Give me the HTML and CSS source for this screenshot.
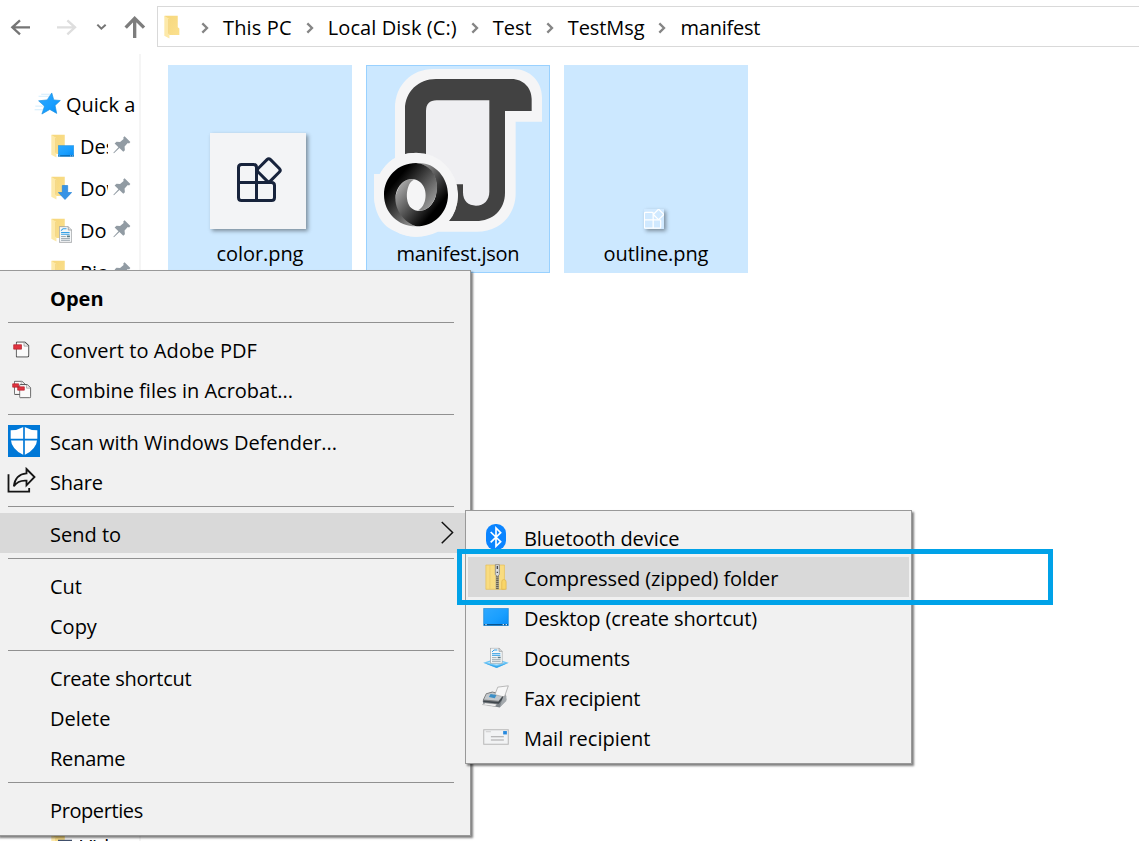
FILE: index.html
```html
<!DOCTYPE html>
<html lang="en">
<head>
<meta charset="utf-8">
<title>manifest</title>
<link rel="stylesheet" href="styles.css">
</head>
<body>
<svg class="defs" width="0" height="0">
  <defs>
    <linearGradient id="gold" x1="0" y1="0" x2="1" y2="1"><stop offset="0" stop-color="#f6d77c"/><stop offset="1" stop-color="#fbe08e"/></linearGradient>
    <linearGradient id="sky" x1="0" y1="0" x2="1" y2="1"><stop offset="0" stop-color="#2ea8ff"/><stop offset=".55" stop-color="#1a9fff"/><stop offset="1" stop-color="#078cf5"/></linearGradient>
    <linearGradient id="ringA" x1="0" y1="0" x2="1" y2="1"><stop offset=".25" stop-color="#000"/><stop offset=".9" stop-color="#bbb"/></linearGradient>
    <linearGradient id="ringB" x1="1" y1="1" x2="0" y2="0"><stop offset=".25" stop-color="#000"/><stop offset=".9" stop-color="#ccc"/></linearGradient>
    <symbol id="folder" viewBox="0 0 50 74">
      <path d="M2 2H43V38L48 42V62H10z" fill="url(#gold)"/>
      <path d="M1 2L17 12V73L1 64z" fill="#fde9a9"/>
      <path d="M15 12V58" stroke="#e9c362" stroke-width="2"/>
    </symbol>
    <symbol id="pin" viewBox="0 0 56 56">
      <path d="M36 1L54 19L50 23L46 22L36 33L37 44L32 49L20 37L3 54L1 52L17 35L5 23L11 18L22 19L33 9L32 5z" fill="#919ba3"/>
    </symbol>
    <symbol id="crumb" viewBox="0 0 24 36"><path d="M4 4L18 18L4 32" fill="none" stroke="#858585" stroke-width="7"/></symbol>
    <symbol id="doc" viewBox="0 0 38 48">
      <path d="M1 1H27L37 11V47H1z" fill="#f5f7f8" stroke="#8b9093" stroke-width="2"/>
      <path d="M27 1V11H37" fill="#ddd" stroke="#8b9093" stroke-width="2"/>
      <path d="M6 13L12 7H22M6 18H31M6 23H31" stroke="#36a0e5" stroke-width="3" fill="none"/>
      <path d="M6 30H20M6 36H32M6 41H32" stroke="#8c9aa3" stroke-width="2.5"/>
      <path d="M23 27H32V32H23z" fill="#5a7a86"/>
    </symbol>
    <symbol id="screen" viewBox="0 0 76 54">
      <path d="M1 1H75V53H1z" fill="url(#sky)" stroke="#1686d6" stroke-width="2"/>
      <path d="M2 50H74" stroke="#08548f" stroke-width="4"/><path d="M6 50H10M58 50H62M67 50H71" stroke="#fff" stroke-width="3"/>
    </symbol>
    <symbol id="page" viewBox="0 0 40 48">
      <path d="M3 2H26L38 13V42Q38 46 34 46H3Q1 46 1 43V5Q1 2 3 2z" fill="#fafafa" stroke="#444" stroke-width="3"/>
      <path d="M24 3V14H37" fill="#eee" stroke="#888" stroke-width="2"/>
    </symbol>
  </defs>
</svg>
<div class="window">
  <header class="toolbar">
    <svg class="nav" viewBox="0 0 471 141">
      <g fill="none" stroke-width="7">
        <path d="M90 82H37M60 61L37 82L60 103" stroke="#757575"/>
        <path d="M171 82H224M202 61L225 82L202 103" stroke="#dedede"/>
        <path d="M292 74L304 86L317 74" stroke="#757575" stroke-width="6"/>
        <path d="M404 114V58M377 83L404 55L432 83" stroke="#7d7d7d" stroke-width="10"/>
      </g>
    </svg>
    <nav class="address">
      <svg class="folder"><use href="#folder"/></svg>
      <svg class="crumb"><use href="#crumb"/></svg><span class="loose">This PC</span>
      <svg class="crumb"><use href="#crumb"/></svg><span class="loose-s">Local Disk (C:)</span>
      <svg class="crumb"><use href="#crumb"/></svg><span>Test</span>
      <svg class="crumb"><use href="#crumb"/></svg><span class="tight-s">TestMsg</span>
      <svg class="crumb"><use href="#crumb"/></svg><span class="tight">manifest</span>
    </nav>
  </header>
  <div class="body">
    <aside class="sidebar">
      <div class="quick">
        <svg class="star" viewBox="102 96 82 68"><path d="M124 102H152M116 108H150M106 138H136M104 149H130" stroke="#b9e2fa" stroke-width="2"/><path d="M156 98L162 119L182 121L166 136L171 160L150 148L126 162L134 138L116 122L142 119z" fill="url(#sky)" stroke="#198fe0" stroke-width="2"/></svg>
        <span>Quick a</span>
      </div>
      <div class="place"><svg class="folder"><use href="#folder"/></svg><svg class="badge screen"><use href="#screen"/></svg><span>Des</span><svg class="pin"><use href="#pin"/></svg></div>
      <div class="place"><svg class="folder"><use href="#folder"/></svg><svg class="badge arrow" viewBox="0 0 42 44"><path d="M13 1H29V22H41L21 43L1 22H13z" fill="#3793e6" stroke="#2382d8" stroke-width="2"/></svg><span>Dow</span><svg class="pin"><use href="#pin"/></svg></div>
      <div class="place"><svg class="folder"><use href="#folder"/></svg><svg class="badge doc"><use href="#doc"/></svg><span>Do</span><svg class="pin"><use href="#pin"/></svg></div>
      <div class="place"><svg class="folder"><use href="#folder"/></svg><span>Pic</span><svg class="pin"><use href="#pin"/></svg></div>
      <div class="place last"><svg class="folder"><use href="#folder"/></svg><svg class="badge film" viewBox="0 0 16 12"><path d="M0 0H16V12H0z" fill="#41506c"/></svg><span>Vid</span></div>
    </aside>
    <main class="files">
      <figure class="file">
        <div class="preview">
          <svg class="thumb color" viewBox="0 0 96 96"><g fill="none" stroke="#17233c" stroke-width="3"><path d="M46.5 34.5Q46.5 31.5 43.5 31.5H31.5Q28.500 31.5 28.500 34.500V64.500Q28.500 67.500 31.500 67.500H61.500Q64.500 67.500 64.500 64.500V52.500Q64.500 49.500 61.500 49.500H28.500M46.500 34.500V67.500"/><rect x="50" y="28.500" width="17.500" height="17.500" rx="2.500" transform="rotate(45 58.750 37.250)"/></g></svg>
        </div>
        <figcaption class="tight-s">color.png</figcaption>
      </figure>
      <figure class="file focused">
        <div class="preview">
          <svg class="json" viewBox="18 15 552 522">
            <path d="M105 290V145C105 75 155 27 220 27H460C510 27 546 65 546 112V185H467V400C467 465 420 515 350 515H234C190 535 145 535 108 515C65 500 42 455 42 405V342H62C72 318 90 302 105 294z" fill="#f5f5f6"/>
            <path d="M198 290V152Q198 121 230 121H390V395Q385 437 348 437Q312 437 309 395V373H280z" fill="#efeff2"/>
            <path d="M135 282V148C135 95 175 57 228 57H455C490 57 515 84 515 117V153H435V398C435 450 397 483 348 483H267Q292 455 294 405L288 373H309V397C309 423 325 437 348 437C372 437 388 420 388 395V121H230Q198 121 198 153V286Q165 274 135 282z" fill="#424242"/>
            <circle cx="168" cy="404" r="126" fill="#f5f5f6"/>
            <path d="M170 499C105 485 94 435 112 392C124 363 145 355 162 359C139 367 132 424 154 444C175 463 216 451 227 409C238 365 222 318 170 309C223 304 264 351 264 404C264 457 223 499 170 499z" fill="url(#ringB)"/>
            <path d="M168 309C114 309 72 351 72 404C72 457 114 499 168 499C124 484 94 433 111 391C123 361 156 346 180 366C207 388 199 440 174 451C201 458 227 428 231 391C235 352 215 314 168 309z" fill="url(#ringA)"/>
          </svg>
        </div>
        <figcaption class="tight">manifest.json</figcaption>
      </figure>
      <figure class="file">
        <div class="preview">
          <svg class="thumb outline" viewBox="24 24 48 48"><g fill="none" stroke="#fff" stroke-width="3"><path d="M46 34Q46 32 43 32H28Q25 32 25 35V67Q25 70 28 70H61Q64 70 64 67V52Q64 50 61 50H25M46 34V70"/><rect x="50" y="28" width="18" height="18" rx="2" transform="rotate(45 59 37)"/></g></svg>
        </div>
        <figcaption class="tight-s">outline.png</figcaption>
      </figure>
    </main>
  </div>

  <div class="menu context">
    <div class="item strong"><span class="label">Open</span></div>
    <hr>
    <div class="item"><svg class="ic pdf" viewBox="40 62 50 50"><use href="#page" x="48" y="63" width="41" height="48"/><path d="M42 73H65V86H42z" fill="#e0323e" stroke="#b3202b" stroke-width="2"/></svg><span class="label loose-s">Convert to Adobe PDF</span></div>
    <div class="item"><svg class="ic pdfs" viewBox="35 179 60 56"><use href="#page" x="41" y="180" width="36" height="44"/><use href="#page" x="57" y="190" width="36" height="44"/><path d="M37 190H55V200H37zM52 199H72V209H52z" fill="#e0323e" stroke="#b3202b" stroke-width="2"/></svg><span class="label">Combine files in Acrobat...</span></div>
    <hr>
    <div class="item"><svg class="ic shield" viewBox="24 315 96 96"><path d="M24 315H120V411H24z" fill="#0078d7"/><path d="M72 320Q92 331 112 331V356Q110 388 72 406Q34 388 32 356V331Q52 331 72 320z" fill="#fff"/><path d="M72 318V408M30 359H114" stroke="#0078d7" stroke-width="5"/></svg><span class="label scan">Scan with Windows Defender...</span></div>
    <div class="item"><svg class="ic share" viewBox="22 441 86 78"><path d="M26 463V515H88V504M80 447L104 471L80 496V482Q55 480 42 499Q46 463 80 460z" fill="none" stroke="#151515" stroke-width="5.500"/></svg><span class="label tight">Share</span></div>
    <hr>
    <div class="item active"><span class="label">Send to</span><svg class="more" viewBox="122 63 39 70"><path d="M124 66L157 98L124 131" fill="none" stroke="#111" stroke-width="4.500"/></svg></div>
    <hr>
    <div class="item"><span class="label">Cut</span></div>
    <div class="item"><span class="label">Copy</span></div>
    <hr>
    <div class="item"><span class="label tight">Create shortcut</span></div>
    <div class="item"><span class="label">Delete</span></div>
    <div class="item"><span class="label tight">Rename</span></div>
    <hr>
    <div class="item"><span class="label tighter">Properties</span></div>
  </div>

  <div class="menu submenu">
    <div class="item"><svg class="ic bt" viewBox="258 71 60 78"><rect x="258" y="71" width="60" height="78" rx="28" fill="#0a84ff"/><path d="M272 95L302 124L288 138V83L302 97L272 126" fill="none" stroke="#fff" stroke-width="5"/></svg><span class="label tight-s">Bluetooth device</span></div>
    <div class="item active"><svg class="ic zip" viewBox="257 191 64 77"><path d="M259 194H314V266H259z" fill="#f9dc80" stroke="#e5be55" stroke-width="2"/><path d="M271 195V265" stroke="#ebc866" stroke-width="2"/><path d="M306 266V244Q306 237 312 237Q319 237 319 244V266z" fill="#f9d568" stroke="#dfb34a" stroke-width="2"/><path d="M293 194V266" stroke="#a8a28e" stroke-width="10"/><path d="M293 226V266" stroke="#66604d" stroke-width="7" stroke-dasharray="3 3"/><path d="M287 193H299V222L293 228L287 222z" fill="#d8dadd" stroke="#777" stroke-width="2"/><path d="M293 197V206M291 216H295" stroke="#444" stroke-width="4"/></svg><span class="label tight-m">Compressed (zipped) folder</span></div>
    <div class="item"><svg class="ic desk"><use href="#screen"/></svg><span class="label tight-m">Desktop (create shortcut)</span></div>
    <div class="item"><svg class="ic docs" viewBox="68 142 78 64"><path d="M69 188L105 176L145 188L109 204z" fill="#6ec5f5"/><path d="M69 188L109 199L145 188L109 204z" fill="#38a8ec"/><path d="M80 188L107 180L133 188L109 195z" fill="#b6e4fb"/><use href="#doc" x="89" y="143" width="38" height="48"/></svg><span class="label tight-m">Documents</span></div>
    <div class="item"><svg class="ic fax" viewBox="66 254 82 72"><path d="M79 280L96 274L137 282L140 298L120 322L71 313L68 302z" fill="#7f858a"/><path d="M79 280L98 275L132 284L117 303L70 299z" fill="#c3c8cc" stroke="#666" stroke-width="2"/><path d="M105 283L114 260L146 256L134 290z" fill="#f7f7f7" stroke="#999" stroke-width="2"/><path d="M92 281L110 284L105 294L87 290z" fill="#3c8fc6"/><path d="M70 303L116 308L131 289" fill="none" stroke="#40474d" stroke-width="5"/><path d="M76 308L111 312L106 319L67 313z" fill="#f3f3f3" stroke="#888"/><path d="M120 321L140 302V286L130 290z" fill="#a4a9ad"/></svg><span class="label tight">Fax recipient</span></div>
    <div class="item"><svg class="ic mail" viewBox="69 386 76 47"><path d="M71 388H143V431H71z" fill="#f2f3f4" stroke="#b8b8b8" stroke-width="3"/><path d="M128 392H139V402H128z" fill="#2789de"/><path d="M92 409H130M92 418H130" stroke="#a5a5a5" stroke-width="3"/><path d="M77 394H92" stroke="#bbb" stroke-width="2"/></svg><span class="label">Mail recipient</span></div>
  </div>
  <div class="callout"></div>
</div>
</body>
</html>
```
FILE: styles.css
```css
* { box-sizing: border-box; }
body {
  margin: 0;
  background: #fff;
  color: #000;
  font-family: "Open Sans", "Noto Sans", sans-serif;
  font-size: 20px;
  line-height: 30px;
}
svg { display: block; flex: none; }
.defs { position: absolute; }
.window { position: relative; width: 1139px; height: 841px; overflow: hidden; }

.loose { letter-spacing: .15px; }
.loose-s { letter-spacing: .08px; }
.scan { letter-spacing: -.03px; }
.tight-s { letter-spacing: -.08px; }
.tight-m { letter-spacing: -.12px; }
.tight { letter-spacing: -.22px; }
.tighter { letter-spacing: -.4px; }

.toolbar { display: flex; height: 54px; }
.nav { width: 157px; height: 47px; }
.address {
  display: flex;
  align-items: center;
  flex: 1;
  height: 41px;
  margin-top: 6px;
  border: 1px solid #d9d9d9;
  border-right: 0;
  white-space: nowrap;
}
.address span { padding-top: 2px; }
.folder { width: 16px; height: 24px; }
.address .folder { margin: 0 21px 0 6px; }
.crumb { width: 8px; height: 12px; margin-top: 2px; }
.address span { margin: 0 14px; }

.body { display: flex; height: 787px; }
.sidebar {
  display: flex;
  flex-direction: column;
  width: 141px;
  padding-top: 29px;
  border-right: 2px solid #f5f5f5;
}
.quick { display: flex; flex: none; align-items: center; height: 42px; padding-left: 34px; white-space: nowrap; }
.quick span { padding-top: 1px; }
.star { width: 27px; height: 23px; margin: -2px 5px 0 0; }
.place { position: relative; display: flex; align-items: center; height: 42px; padding-left: 51px; flex: none; }
.place span { width: 28px; margin: 2px 5px 0 13px; overflow: hidden; }
.pin { width: 18px; height: 18px; margin-top: -3px; }
.badge { position: absolute; }
.badge.screen { left: 58px; top: 20px; width: 16px; height: 12px; }
.badge.arrow { left: 58px; top: 18px; width: 14px; height: 15px; }
.badge.doc { left: 59px; top: 17px; width: 13px; height: 17px; }
.badge.film { left: 58px; top: 14px; width: 14px; height: 12px; }
.place.last { margin-top: 532px; }
.place.last span { width: 32px; }

.files { display: flex; gap: 14px; padding: 11px 0 0 27px; }
.file { width: 184px; height: 208px; margin: 0; background: #cce8ff; }
.focused { box-shadow: inset 0 0 0 1px #99d1ff; }
.preview { display: flex; align-items: flex-end; justify-content: center; height: 174px; }
.json { width: 184px; height: 174px; }
.thumb { box-shadow: 2px 2px 4px rgba(0, 0, 0, .4); }
.color { width: 96px; height: 96px; margin: 0 4px 10px 0; background: #f3f4f6; }
.outline { width: 20px; height: 20px; margin: 0 4px 10px 0; background: #d0e9ff; }
.file figcaption { text-align: center; }

.menu {
  position: absolute;
  padding: 6px 2px;
  background: #f1f1f1;
  border: 1px solid #999;
  box-shadow: 2px 2px 2px rgba(0, 0, 0, .5);
}
.context { left: -3px; top: 270px; width: 474px; height: 566px; }
.submenu { left: 465px; top: 510px; width: 447px; height: 254px; }
.item { position: relative; display: flex; align-items: center; height: 40px; }
.label { padding-top: 3px; margin-left: 50px; white-space: nowrap; }
.submenu .label { margin-left: 56px; }
.active { background: #d9d9d9; }
.strong { font-weight: 700; }
.menu hr { height: 1px; margin: 5px 14px 6px 8px; border: 0; background: #919191; }
.more { width: 13px; height: 23px; margin: -2px 14px 0 auto; }
.ic { position: absolute; }
.pdf { left: 13px; top: 12px; width: 17px; height: 17px; }
.pdfs { left: 12px; top: 11px; width: 20px; height: 19px; }
.shield { left: 8px; top: 4px; width: 32px; height: 32px; }
.share { left: 7px; top: 6px; width: 29px; height: 26px; }
.bt { left: 18px; top: 7px; width: 20px; height: 26px; }
.zip { left: 17px; top: 7px; width: 22px; height: 26px; }
.desk { left: 15px; top: 11px; width: 26px; height: 18px; }
.docs { left: 15px; top: 10px; width: 26px; height: 22px; }
.fax { left: 14px; top: 8px; width: 27px; height: 24px; }
.mail { left: 15px; top: 12px; width: 26px; height: 16px; }

.callout { position: absolute; left: 457px; top: 549px; width: 596px; height: 56px; border: 5px solid #00a2e8; }
```
